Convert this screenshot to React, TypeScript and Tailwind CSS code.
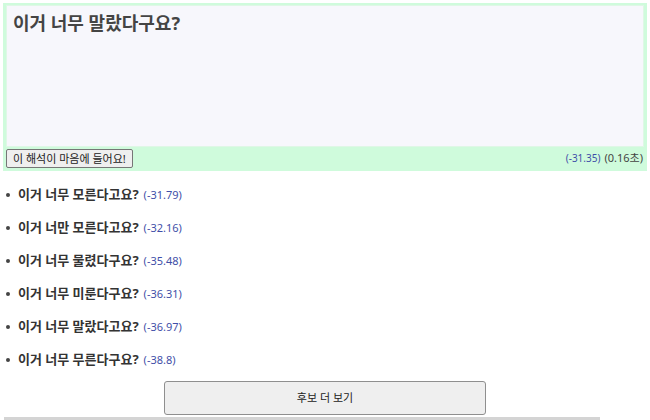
import React from 'react';

const candidates = [
  { text: '이거 너무 모른다고요?', score: '(-31.79)' },
  { text: '이거 너만 모른다고요?', score: '(-32.16)' },
  { text: '이거 너무 물렸다구요?', score: '(-35.48)' },
  { text: '이거 너무 미룬다구요?', score: '(-36.31)' },
  { text: '이거 너무 말랐다고요?', score: '(-36.97)' },
  { text: '이거 너무 무른다구요?', score: '(-38.8)' },
];

const App: React.FC = () => {
  return (
    <div
      className="w-[650px] h-[420px] bg-white overflow-hidden text-[#333]"
      style={{ fontFamily: '"Noto Sans", "Noto Sans CJK KR", sans-serif' }}
    >
      {/* Input box */}
      <div className="mx-[3px] mt-[3px] bg-[#cffbdc] px-[3px] pt-[2px] pb-[3px]">
        <div className="h-[142px] bg-[#f7f7fc] border border-[#dff7e6] px-[6px] py-[4px]">
          <div className="text-[18px] font-bold text-[#444] leading-[26px]">이거 너무 말랐다구요?</div>
        </div>
        <div className="flex items-center justify-between h-[20px] mt-[1px]">
          <button className="h-[19px] px-[6px] bg-[#efefef] border border-[#767676] rounded-[2px] text-[11px] leading-none text-[#222]">
            이 해석이 마음에 들어요!
          </button>
          <div className="flex items-center gap-[4px] pr-[1px]">
            <span className="text-[10px] text-[#3f4fa8]">(-31.35)</span>
            <span className="text-[11px] text-[#444]">(0.16초)</span>
          </div>
        </div>
      </div>

      {/* Candidate list */}
      <ul className="mt-[14px] pl-[6px] flex flex-col gap-[13px]">
        {candidates.map((c) => (
          <li key={c.score} className="flex items-center h-[20px]">
            <span className="w-[4px] h-[4px] rounded-full bg-[#444] mr-[8px]" />
            <span className="text-[13px] font-bold text-[#333]">{c.text}</span>
            <span className="ml-[5px] text-[11px] text-[#3f4fa8]">{c.score}</span>
          </li>
        ))}
      </ul>

      <div className="flex justify-center mt-[11px]">
        <button className="w-[322px] h-[34px] bg-[#efefef] border border-[#8f8f8f] rounded-[3px] text-[11px] text-[#222]">
          후보 더 보기
        </button>
      </div>
      <div className="ml-[4px] mt-[2px] w-[596px] h-[3px] bg-[#d4d4d4]" />
    </div>
  );
};

export default App;
